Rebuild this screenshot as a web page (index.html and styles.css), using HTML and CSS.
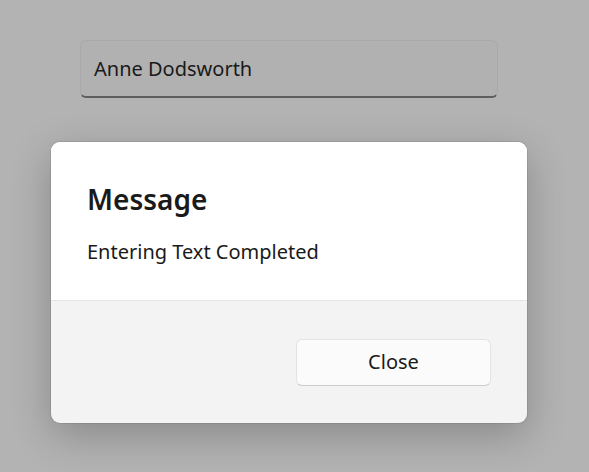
FILE: index.html
```html
<!DOCTYPE html>
<html>
<head>
<meta charset="utf-8">
<link rel="stylesheet" href="styles.css">
</head>
<body>
<div class="page">
  <div class="textbox"><span class="value">Anne Dodsworth</span></div>
  <div class="dialog">
    <div class="dialog-body">
      <div class="title">Message</div>
      <div class="content">Entering Text Completed</div>
    </div>
    <div class="dialog-footer">
      <button class="btn">Close</button>
    </div>
  </div>
</div>
</body>
</html>
```
FILE: styles.css
```css
html, body {
  margin: 0;
  padding: 0;
  background: #b3b3b3;
  font-family: "Noto Sans", "Open Sans", sans-serif;
  color: #1b1b1b;
}
.page {
  width: 589px;
  height: 472px;
  padding-top: 40px;
  box-sizing: border-box;
  overflow: hidden;
}
.textbox {
  margin-left: 80px;
  width: 418px;
  height: 58px;
  box-sizing: border-box;
  border: 1px solid #a9a9a9;
  border-bottom: 2px solid #5e5e5e;
  border-radius: 6px;
  background: #b1b1b1;
  display: flex;
  align-items: center;
  padding-left: 13px;
  padding-bottom: 0;
}
.value {
  font-size: 20px;
  color: #1a1a1a;
}
.dialog {
  margin-top: 44px;
  margin-left: 51px;
  width: 476px;
  height: 281px;
  border-radius: 9px;
  background: #f3f3f3;
  overflow: hidden;
  box-shadow: 0 12px 40px rgba(0,0,0,0.24), 0 0 0 1px rgba(0,0,0,0.08);
  display: flex;
  flex-direction: column;
}
.dialog-body {
  background: #ffffff;
  height: 159px;
  box-sizing: border-box;
  padding: 36px 36px 0 36px;
  border-bottom: 1px solid #e5e5e5;
}
.title {
  font-size: 28px;
  font-weight: 600;
  line-height: 42px;
  color: #1a1a1a;
}
.content {
  margin-top: 17px;
  font-size: 20px;
  line-height: 30px;
  color: #1a1a1a;
}
.dialog-footer {
  flex: 1;
  display: flex;
  justify-content: flex-end;
  align-items: flex-start;
  padding: 38px 36px 0 0;
}
.btn {
  width: 195px;
  height: 47px;
  border: 1px solid #e3e3e3;
  border-bottom-color: #cccccc;
  border-radius: 6px;
  background: #fbfbfb;
  font-family: inherit;
  font-size: 20px;
  color: #1a1a1a;
  padding: 0 0 2px 0;
}
```
